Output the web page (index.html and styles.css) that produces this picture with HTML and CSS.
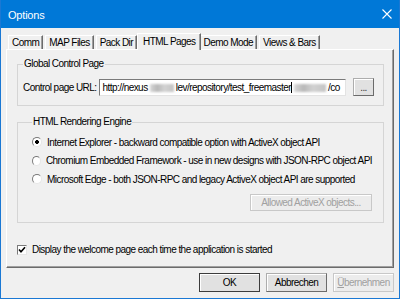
FILE: index.html
```html
<!DOCTYPE html>
<html lang="en">
<head>
    <meta charset="UTF-8">
    <title>Options</title>
    <link rel="stylesheet" href="styles.css">
</head>
<body>

    <div class="window">
        <div class="titlebar">
            <span class="title">Options</span>
            <svg class="close" width="10" height="10" viewBox="0 0 10 10">
                <path d="M0.5 0.5 L9.5 9.5 M9.5 0.5 L0.5 9.5" stroke="#fff" stroke-width="1.1" fill="none"/>
            </svg>
        </div>

        <div class="tabs">
            <div class="tab">Comm</div>
            <div class="tab">MAP Files</div>
            <div class="tab">Pack Dir</div>
            <div class="tab active">HTML Pages</div>
            <div class="tab">Demo Mode</div>
            <div class="tab">Views &amp; Bars</div>
        </div>

        <div class="panel">
            <fieldset class="group group-url">
                <legend>Global Control Page</legend>
                <div class="url-row">
                    <label>Control page URL:</label>
                    <div class="url-input">http://nexus <span class="smudge s1"></span>lev/repository/test_freemaster<span class="caret"></span><span class="smudge s2"></span>/co</div>
                    <button class="btn small">...</button>
                </div>
            </fieldset>

            <fieldset class="group group-engine">
                <legend>HTML Rendering Engine</legend>
                <label class="radio-row"><input type="radio" name="engine" checked> Internet Explorer - backward compatible option with ActiveX object API</label>
                <label class="radio-row"><input type="radio" name="engine"> Chromium Embedded Framework - use in new designs with JSON-RPC object API</label>
                <label class="radio-row"><input type="radio" name="engine"> Microsoft Edge - both JSON-RPC and legacy ActiveX object API are supported</label>
                <div class="allowed-row">
                    <button class="btn disabled wide">Allowed ActiveX objects...</button>
                </div>
            </fieldset>

            <label class="check-row">
                <span class="checkbox">
                    <svg width="8" height="8" viewBox="0 0 8 8"><path d="M1 3.5 L3 5.8 L7 1.2" stroke="#000" stroke-width="1.6" fill="none"/></svg>
                </span>
                Display the welcome page each time the application is started
            </label>
        </div>

        <div class="buttons">
            <button class="btn default">OK</button>
            <button class="btn">Abbrechen</button>
            <button class="btn disabled"><u>Ü</u>bernehmen</button>
        </div>
    </div>

</body>
</html>
```

FILE: styles.css
```css
body {
    margin: 0;
    padding: 0;
    font-family: "Liberation Sans", Arial, sans-serif;
    font-size: 10px;
    letter-spacing: -0.55px;
    color: #000;
}

.window {
    width: 400px;
    height: 299px;
    box-sizing: border-box;
    border: 1px solid #1a78d4;
    border-top: none;
    background-color: #f0f0f0;
    display: flex;
    flex-direction: column;
}

.titlebar {
    height: 28px;
    background-color: #0078d7;
    display: flex;
    align-items: center;
    justify-content: space-between;
    padding: 0 7px 0 7px;
    color: white;
    flex-shrink: 0;
}

.title {
    font-size: 11px;
    letter-spacing: -0.2px;
    margin-top: 1px;
}

.tabs {
    display: flex;
    align-items: flex-end;
    height: 16px;
    margin-top: 5px;
    padding-left: 7px;
    position: relative;
    z-index: 1;
}

.tab {
    height: 14px;
    line-height: 14px;
    padding: 0 3px;
    margin-right: 2px;
    border-top: 1px solid #fff;
    border-left: 1px solid #fff;
    border-right: 1px solid #6b6b6b;
    box-sizing: border-box;
    box-shadow: inset -1px 0 0 #a0a0a0;
    white-space: nowrap;
}

.tab.active {
    height: 17px;
    line-height: 16px;
    margin: 0 0 -1px -2px;
    padding: 0 4px 0 5px;
    background-color: #f0f0f0;
    position: relative;
}

.tab.active + .tab {
    margin-left: -1px;
}

.panel {
    height: 219px;
    margin: 0 5px;
    box-sizing: border-box;
    border-top: 1px solid #fff;
    border-left: 1px solid #fff;
    border-right: 1px solid #6b6b6b;
    border-bottom: 1px solid #6b6b6b;
    box-shadow: inset -1px -1px 0 #a0a0a0;
    padding: 8px 9px 0 10px;
}

.group {
    margin: 0;
    min-width: 0;
    border: 1px solid #d5d5d5;
    padding: 0 9px 0 5px;
}

.group legend {
    padding: 0 1px;
    line-height: 12px;
}

.url-row {
    display: flex;
    align-items: center;
    height: 18px;
    margin-top: 8px;
    margin-bottom: 9px;
}

.url-row label {
    white-space: nowrap;
    margin-right: 3px;
}

.url-input {
    flex: 1;
    min-width: 0;
    height: 17px;
    line-height: 15px;
    box-sizing: border-box;
    border: 1px solid #7a7a7a;
    border-right-color: #e3e3e3;
    border-bottom-color: #e3e3e3;
    background-color: #fff;
    padding-left: 2px;
    white-space: nowrap;
    overflow: hidden;
}

.smudge {
    display: inline-block;
    height: 8px;
    vertical-align: -1px;
    background: linear-gradient(90deg, #d8d8d8, #b8b8b8 30%, #d2d2d2 60%, #c4c4c4);
    filter: blur(1px);
}

.s1 {
    width: 24px;
    margin-right: 2px;
}

.s2 {
    width: 32px;
    margin: 0 2px;
}

.caret {
    display: inline-block;
    width: 1px;
    height: 11px;
    background-color: #000;
    vertical-align: -2px;
}

.btn {
    font-family: inherit;
    font-size: 10px;
    letter-spacing: -0.55px;
    background-color: #e1e1e1;
    border: 1px solid #adadad;
    border-right-color: #6b6b6b;
    border-bottom-color: #6b6b6b;
    box-shadow: inset 1px 1px 0 #fff;
    padding: 0;
    color: #000;
    height: 19px;
    width: 61px;
}

.btn.small {
    width: 21px;
    height: 18px;
    margin-left: 7px;
    color: #333;
    flex-shrink: 0;
}

.btn.disabled {
    color: #a0a0a0;
    background-color: #ececec;
    border-color: #c8c8c8;
}

.btn.default {
    border: 1px solid #3c3c3c;
}

.group-engine {
    margin-top: 10px;
    padding: 0 11px 11px 14px;
}

.radio-row {
    display: flex;
    align-items: center;
    height: 18.5px;
    white-space: nowrap;
}

.radio-row:first-of-type {
    margin-top: 5px;
}

.radio-row input {
    appearance: none;
    margin: 0 5px 0 0;
    width: 10px;
    height: 10px;
    border-radius: 50%;
    border: 1px solid;
    border-color: #7a7a7a #e6e6e6 #e6e6e6 #7a7a7a;
    background-color: #fff;
    box-sizing: border-box;
}

.radio-row input:checked {
    background: radial-gradient(circle, #000 0, #000 1.6px, #fff 2.2px);
}

.allowed-row {
    display: flex;
    justify-content: flex-end;
    margin-top: 5px;
}

.btn.wide {
    width: 122px;
    height: 17px;
}

.check-row {
    display: flex;
    align-items: center;
    height: 18px;
    margin-top: 18px;
    gap: 5px;
    white-space: nowrap;
}

.checkbox {
    width: 10px;
    height: 10px;
    box-sizing: border-box;
    border: 1px solid;
    border-color: #7a7a7a #e6e6e6 #e6e6e6 #7a7a7a;
    background-color: #fff;
    display: flex;
    align-items: center;
    justify-content: center;
}

.buttons {
    display: flex;
    justify-content: flex-end;
    gap: 6px;
    margin: 5px 5px 0 0;
}
```
